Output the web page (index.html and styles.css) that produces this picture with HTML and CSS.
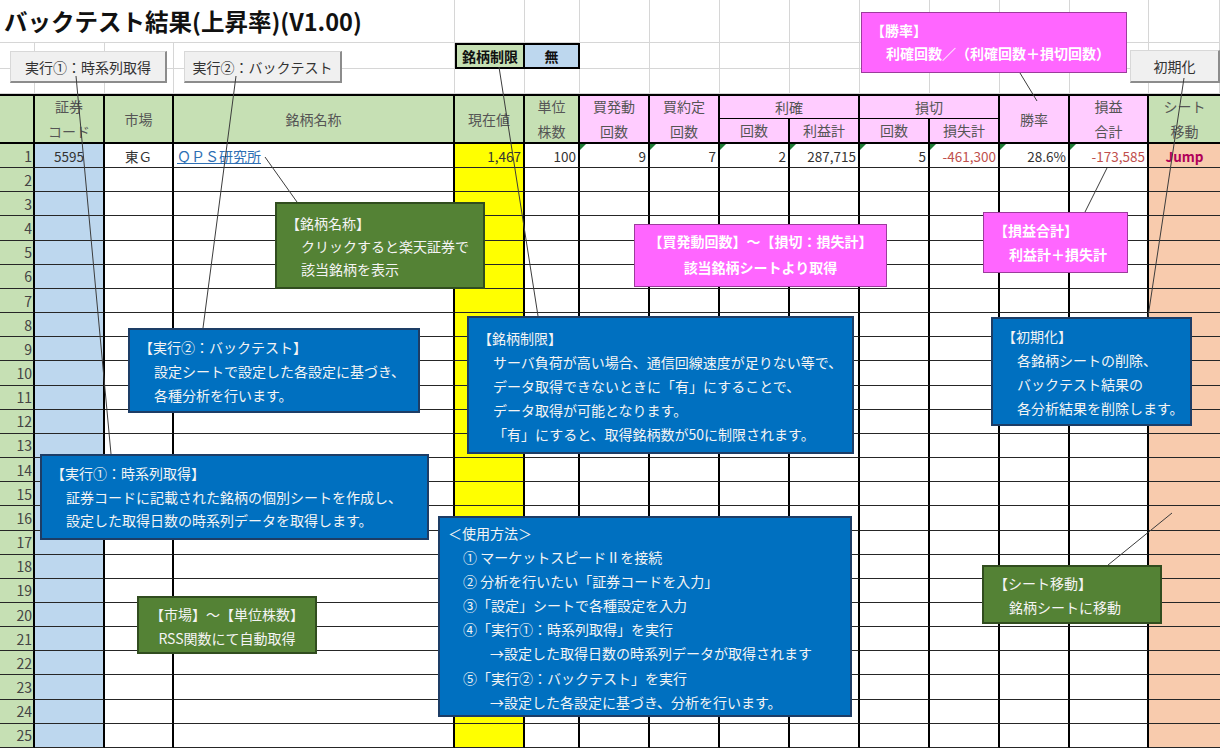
FILE: index.html
```html
<!DOCTYPE html>
<html lang="ja">
<head>
<meta charset="utf-8">
<title>バックテスト結果(上昇率)(V1.00)</title>
<link rel="stylesheet" href="styles.css">
</head>
<body>
<div class="page">
  <div class="sheet">
    <div class="row top">
      <div class="title">バックテスト結果(上昇率)(V1.00)</div>
      <div></div><div></div><div></div><div></div><div></div><div></div><div></div><div></div><div></div><div></div><div></div>
    </div>
    <div class="row top">
      <div></div><div></div><div></div><div></div>
      <div class="lim">銘柄制限</div><div class="none">無</div>
      <div></div><div></div><div></div><div></div><div></div><div></div><div></div><div></div><div></div>
    </div>
    <div class="row top">
      <div></div><div></div><div></div><div></div><div></div><div></div><div></div><div></div><div></div><div></div><div></div><div></div><div></div><div></div><div></div>
    </div>
    <div class="row head h1">
      <div class="tall"></div>
      <div class="tall">証券<br>コード</div>
      <div class="tall">市場</div>
      <div class="tall">銘柄名称</div>
      <div class="tall">現在値</div>
      <div class="tall">単位<br>株数</div>
      <div class="tall pk">買発動<br>回数</div>
      <div class="tall pk">買約定<br>回数</div>
      <div class="grp pk">利確</div>
      <div class="grp pk">損切</div>
      <div class="tall pk">勝率</div>
      <div class="tall pk">損益<br>合計</div>
      <div class="tall last">シート<br>移動</div>
    </div>
    <div class="row head h2">
      <div class="pk">回数</div><div class="pk">利益計</div><div class="pk">回数</div><div class="pk">損失計</div>
    </div>
    <div class="row data">
      <div class="n">1</div><div class="b c">5595</div><div class="c">東Ｇ</div><div class="nm"><span class="lk">ＱＰＳ研究所</span></div><div class="y r">1,467</div><div class="r">100</div><div class="r t">9</div><div class="r t">7</div><div class="r t">2</div><div class="r t">287,715</div><div class="r t">5</div><div class="r t neg">-461,300</div><div class="r t">28.6%</div><div class="r t neg">-173,585</div><div class="o c jump">Jump</div>
    </div>
    <div class="row data"><div class="n">2</div><div class="b"></div><div></div><div></div><div class="y"></div><div></div><div></div><div></div><div></div><div></div><div></div><div></div><div></div><div></div><div class="o"></div></div>
    <div class="row data"><div class="n">3</div><div class="b"></div><div></div><div></div><div class="y"></div><div></div><div></div><div></div><div></div><div></div><div></div><div></div><div></div><div></div><div class="o"></div></div>
    <div class="row data"><div class="n">4</div><div class="b"></div><div></div><div></div><div class="y"></div><div></div><div></div><div></div><div></div><div></div><div></div><div></div><div></div><div></div><div class="o"></div></div>
    <div class="row data"><div class="n">5</div><div class="b"></div><div></div><div></div><div class="y"></div><div></div><div></div><div></div><div></div><div></div><div></div><div></div><div></div><div></div><div class="o"></div></div>
    <div class="row data"><div class="n">6</div><div class="b"></div><div></div><div></div><div class="y"></div><div></div><div></div><div></div><div></div><div></div><div></div><div></div><div></div><div></div><div class="o"></div></div>
    <div class="row data"><div class="n">7</div><div class="b"></div><div></div><div></div><div class="y"></div><div></div><div></div><div></div><div></div><div></div><div></div><div></div><div></div><div></div><div class="o"></div></div>
    <div class="row data"><div class="n">8</div><div class="b"></div><div></div><div></div><div class="y"></div><div></div><div></div><div></div><div></div><div></div><div></div><div></div><div></div><div></div><div class="o"></div></div>
    <div class="row data"><div class="n">9</div><div class="b"></div><div></div><div></div><div class="y"></div><div></div><div></div><div></div><div></div><div></div><div></div><div></div><div></div><div></div><div class="o"></div></div>
    <div class="row data"><div class="n">10</div><div class="b"></div><div></div><div></div><div class="y"></div><div></div><div></div><div></div><div></div><div></div><div></div><div></div><div></div><div></div><div class="o"></div></div>
    <div class="row data"><div class="n">11</div><div class="b"></div><div></div><div></div><div class="y"></div><div></div><div></div><div></div><div></div><div></div><div></div><div></div><div></div><div></div><div class="o"></div></div>
    <div class="row data"><div class="n">12</div><div class="b"></div><div></div><div></div><div class="y"></div><div></div><div></div><div></div><div></div><div></div><div></div><div></div><div></div><div></div><div class="o"></div></div>
    <div class="row data"><div class="n">13</div><div class="b"></div><div></div><div></div><div class="y"></div><div></div><div></div><div></div><div></div><div></div><div></div><div></div><div></div><div></div><div class="o"></div></div>
    <div class="row data"><div class="n">14</div><div class="b"></div><div></div><div></div><div class="y"></div><div></div><div></div><div></div><div></div><div></div><div></div><div></div><div></div><div></div><div class="o"></div></div>
    <div class="row data"><div class="n">15</div><div class="b"></div><div></div><div></div><div class="y"></div><div></div><div></div><div></div><div></div><div></div><div></div><div></div><div></div><div></div><div class="o"></div></div>
    <div class="row data"><div class="n">16</div><div class="b"></div><div></div><div></div><div class="y"></div><div></div><div></div><div></div><div></div><div></div><div></div><div></div><div></div><div></div><div class="o"></div></div>
    <div class="row data"><div class="n">17</div><div class="b"></div><div></div><div></div><div class="y"></div><div></div><div></div><div></div><div></div><div></div><div></div><div></div><div></div><div></div><div class="o"></div></div>
    <div class="row data"><div class="n">18</div><div class="b"></div><div></div><div></div><div class="y"></div><div></div><div></div><div></div><div></div><div></div><div></div><div></div><div></div><div></div><div class="o"></div></div>
    <div class="row data"><div class="n">19</div><div class="b"></div><div></div><div></div><div class="y"></div><div></div><div></div><div></div><div></div><div></div><div></div><div></div><div></div><div></div><div class="o"></div></div>
    <div class="row data"><div class="n">20</div><div class="b"></div><div></div><div></div><div class="y"></div><div></div><div></div><div></div><div></div><div></div><div></div><div></div><div></div><div></div><div class="o"></div></div>
    <div class="row data"><div class="n">21</div><div class="b"></div><div></div><div></div><div class="y"></div><div></div><div></div><div></div><div></div><div></div><div></div><div></div><div></div><div></div><div class="o"></div></div>
    <div class="row data"><div class="n">22</div><div class="b"></div><div></div><div></div><div class="y"></div><div></div><div></div><div></div><div></div><div></div><div></div><div></div><div></div><div></div><div class="o"></div></div>
    <div class="row data"><div class="n">23</div><div class="b"></div><div></div><div></div><div class="y"></div><div></div><div></div><div></div><div></div><div></div><div></div><div></div><div></div><div></div><div class="o"></div></div>
    <div class="row data"><div class="n">24</div><div class="b"></div><div></div><div></div><div class="y"></div><div></div><div></div><div></div><div></div><div></div><div></div><div></div><div></div><div></div><div class="o"></div></div>
    <div class="row data"><div class="n">25</div><div class="b"></div><div></div><div></div><div class="y"></div><div></div><div></div><div></div><div></div><div></div><div></div><div></div><div></div><div></div><div class="o"></div></div>
  </div>

  <div class="btn btn-ts">実行①：時系列取得</div>
  <div class="btn btn-bt">実行②：バックテスト</div>
  <div class="btn btn-init">初期化</div>

  <svg class="wires" width="1220" height="751" viewBox="0 0 1220 751">
    <line x1="76" y1="76" x2="111" y2="454"/>
    <line x1="236" y1="76" x2="203" y2="328"/>
    <line x1="499" y1="67" x2="538" y2="316"/>
    <line x1="265" y1="157" x2="297" y2="202"/>
    <line x1="1020" y1="73" x2="1037" y2="101"/>
    <line x1="1107" y1="168" x2="1085" y2="212"/>
    <line x1="1184" y1="78" x2="1148" y2="317"/>
    <line x1="1172" y1="513" x2="1108" y2="565"/>
  </svg>

  <div class="tip pink tip-win">
    <p>【勝率】</p>
    <p class="in">利確回数／（利確回数＋損切回数）</p>
  </div>
  <div class="tip green tip-name">
    <p>【銘柄名称】</p>
    <p class="in">クリックすると楽天証券で</p>
    <p class="in">該当銘柄を表示</p>
  </div>
  <div class="tip pink tip-fetch">
    <p>【買発動回数】～【損切：損失計】</p>
    <p>該当銘柄シートより取得</p>
  </div>
  <div class="tip pink tip-pl">
    <p>【損益合計】</p>
    <p class="in">利益計＋損失計</p>
  </div>
  <div class="tip blue tip-bt">
    <p>【実行②：バックテスト】</p>
    <p class="in">設定シートで設定した各設定に基づき、</p>
    <p class="in">各種分析を行います。</p>
  </div>
  <div class="tip blue tip-lim">
    <p>【銘柄制限】</p>
    <p class="in">サーバ負荷が高い場合、通信回線速度が足りない等で、</p>
    <p class="in">データ取得できないときに「有」にすることで、</p>
    <p class="in">データ取得が可能となります。</p>
    <p class="in">「有」にすると、取得銘柄数が50に制限されます。</p>
  </div>
  <div class="tip blue tip-init">
    <p>【初期化】</p>
    <p class="in">各銘柄シートの削除、</p>
    <p class="in">バックテスト結果の</p>
    <p class="in">各分析結果を削除します。</p>
  </div>
  <div class="tip blue tip-ts">
    <p>【実行①：時系列取得】</p>
    <p class="in">証券コードに記載された銘柄の個別シートを作成し、</p>
    <p class="in">設定した取得日数の時系列データを取得します。</p>
  </div>
  <div class="tip blue tip-howto">
    <p>＜使用方法＞</p>
    <p class="in">① マーケットスピードⅡを接続</p>
    <p class="in">② 分析を行いたい「証券コードを入力」</p>
    <p class="in">③「設定」シートで各種設定を入力</p>
    <p class="in">④「実行①：時系列取得」を実行</p>
    <p class="in3">→設定した取得日数の時系列データが取得されます</p>
    <p class="in">⑤「実行②：バックテスト」を実行</p>
    <p class="in3">→設定した各設定に基づき、分析を行います。</p>
  </div>
  <div class="tip green tip-mkt">
    <p>【市場】～【単位株数】</p>
    <p>RSS関数にて自動取得</p>
  </div>
  <div class="tip green tip-jump">
    <p>【シート移動】</p>
    <p class="in">銘柄シートに移動</p>
  </div>
</div>
</body>
</html>
```
FILE: styles.css
```css
* { box-sizing: border-box; margin: 0; padding: 0; }
body {
  margin: 0;
  background: #fff;
  font-family: "Noto Sans CJK JP", "Noto Sans", sans-serif;
  color: #333;
}
.page {
  position: relative;
  width: 1220px;
  height: 751px;
  overflow: hidden;
}

/* ---------- spreadsheet grid ---------- */
.sheet {
  display: grid;
  grid-template-columns: 35px 70px 69px 281px 70px 55px 70px 70px 70px 70px 70px 70px 70px 79px 71px;
  grid-template-rows: 43px 26px 25px 25px 25px repeat(25, 24.16px);
  font-size: 14px;
}
.row { display: contents; }

.top > div {
  border-right: 1px solid #d6d6d6;
  border-bottom: 1px solid #d6d6d6;
}
.top > .title {
  grid-column: span 4;
  font-size: 23.5px;
  font-weight: 700;
  color: #111;
  padding-left: 4px;
  display: flex;
  align-items: center;
  white-space: nowrap;
}
.top > .lim,
.top > .none {
  border: 2px solid #000;
  font-weight: 700;
  color: #111;
  display: flex;
  align-items: center;
  justify-content: center;
  font-size: 14px;
}
.top > .lim { background: #c6e0b4; }
.top > .none { background: #bdd7ee; border-left: none; }

.head > div {
  background: #c6e0b4;
  border-right: 2px solid #000;
  display: flex;
  align-items: center;
  justify-content: center;
  text-align: center;
  line-height: 25px;
  color: #555;
}
.head > .pk { background: #ffccff; }
.h1 > div { border-top: 2px solid #000; }
.h1 > .tall { grid-row: span 2; border-bottom: 2px solid #000; }
.h1 > .grp { grid-column: span 2; border-bottom: 1px solid #000; }
.h1 > .last { border-right: none; }
.h2 > div { border-bottom: 2px solid #000; }

.data > div {
  position: relative;
  border-right: 2px solid #000;
  border-bottom: 1px solid #262626;
  display: flex;
  align-items: center;
  padding: 0 2px;
  font-size: 13.5px;
  color: #333;
  white-space: nowrap;
}
.data > .n {
  background: #c6e0b4;
  justify-content: flex-end;
  padding-right: 1px;
  color: #444;
  font-size: 14px;
}
.data > .b { background: #bdd7ee; }
.data > .y { background: #ffff00; }
.data > .o { background: #f8cbad; border-right: none; }
.data > .c { justify-content: center; }
.data > .r { justify-content: flex-end; }
.data > .nm { padding-left: 3px; }
.data > .neg { color: #c0504d; }
.data > .jump { color: #b0005a; font-weight: 700; }
.data > .t::before {
  content: "";
  position: absolute;
  left: 0;
  top: 0;
  border-top: 6px solid #1e7a34;
  border-right: 6px solid transparent;
}
.lk {
  color: #2e6fb4;
  text-decoration: underline;
  font-size: 14px;
}

/* ---------- form buttons ---------- */
.btn {
  position: absolute;
  background: #f0f0f0;
  border: 1px solid #d8d8d8;
  border-right: 2px solid #8c8c8c;
  border-bottom: 2px solid #8c8c8c;
  font-size: 14px;
  color: #333;
  display: flex;
  align-items: center;
  justify-content: center;
  white-space: nowrap;
}
.btn-ts { left: 10px; top: 51px; width: 157px; height: 32px; }
.btn-bt { left: 184px; top: 51px; width: 158px; height: 32px; }
.btn-init { left: 1130px; top: 50px; width: 90px; height: 33px; }

/* ---------- connector lines ---------- */
.wires {
  position: absolute;
  left: 0;
  top: 0;
  pointer-events: none;
}
.wires line { stroke: #3c3c3c; stroke-width: 1; }

/* ---------- callouts ---------- */
.tip {
  position: absolute;
  color: #f4f4f4;
  font-size: 14px;
  line-height: 24px;
  padding-left: 9px;
  white-space: nowrap;
}
.tip p { margin: 0; }
.tip .in { padding-left: 15px; }
.tip .in3 { padding-left: 42px; }
.blue { background: #0070c0; border: 2px solid #1d3d66; }
.green { background: #548235; border: 2px solid #314d1f; }
.pink { background: #ff66ff; border: 1.5px solid #9c3c9c; color: #fff; font-weight: 700; }

.tip-win { left: 861px; top: 12px; width: 266px; height: 61px; padding-top: 6px; line-height: 23px; }
.tip-name { left: 275px; top: 202px; width: 210px; height: 87px; padding-top: 8px; line-height: 23px; }
.tip-fetch { left: 634px; top: 224px; width: 253px; height: 63px; padding: 3px 0 0; line-height: 26px; text-align: center; }
.tip-pl { left: 983px; top: 212px; width: 145px; height: 61px; padding-top: 5px; padding-left: 10px; }
.tip-bt { left: 128px; top: 328px; width: 292px; height: 85px; padding-top: 5px; }
.tip-lim { left: 467px; top: 316px; width: 387px; height: 138px; padding-top: 8px; }
.tip-init { left: 991px; top: 317px; width: 201px; height: 109px; padding-top: 5px; }
.tip-ts { left: 40px; top: 454px; width: 389px; height: 86px; padding-top: 6px; line-height: 23.5px; }
.tip-howto { left: 438px; top: 516px; width: 414px; height: 201px; padding-top: 3px; padding-left: 8px; line-height: 24.1px; }
.tip-mkt { left: 137px; top: 596px; width: 180px; height: 58px; padding: 4px 0 0; text-align: center; }
.tip-jump { left: 982px; top: 565px; width: 180px; height: 59px; padding-top: 4px; padding-left: 10px; }
```
